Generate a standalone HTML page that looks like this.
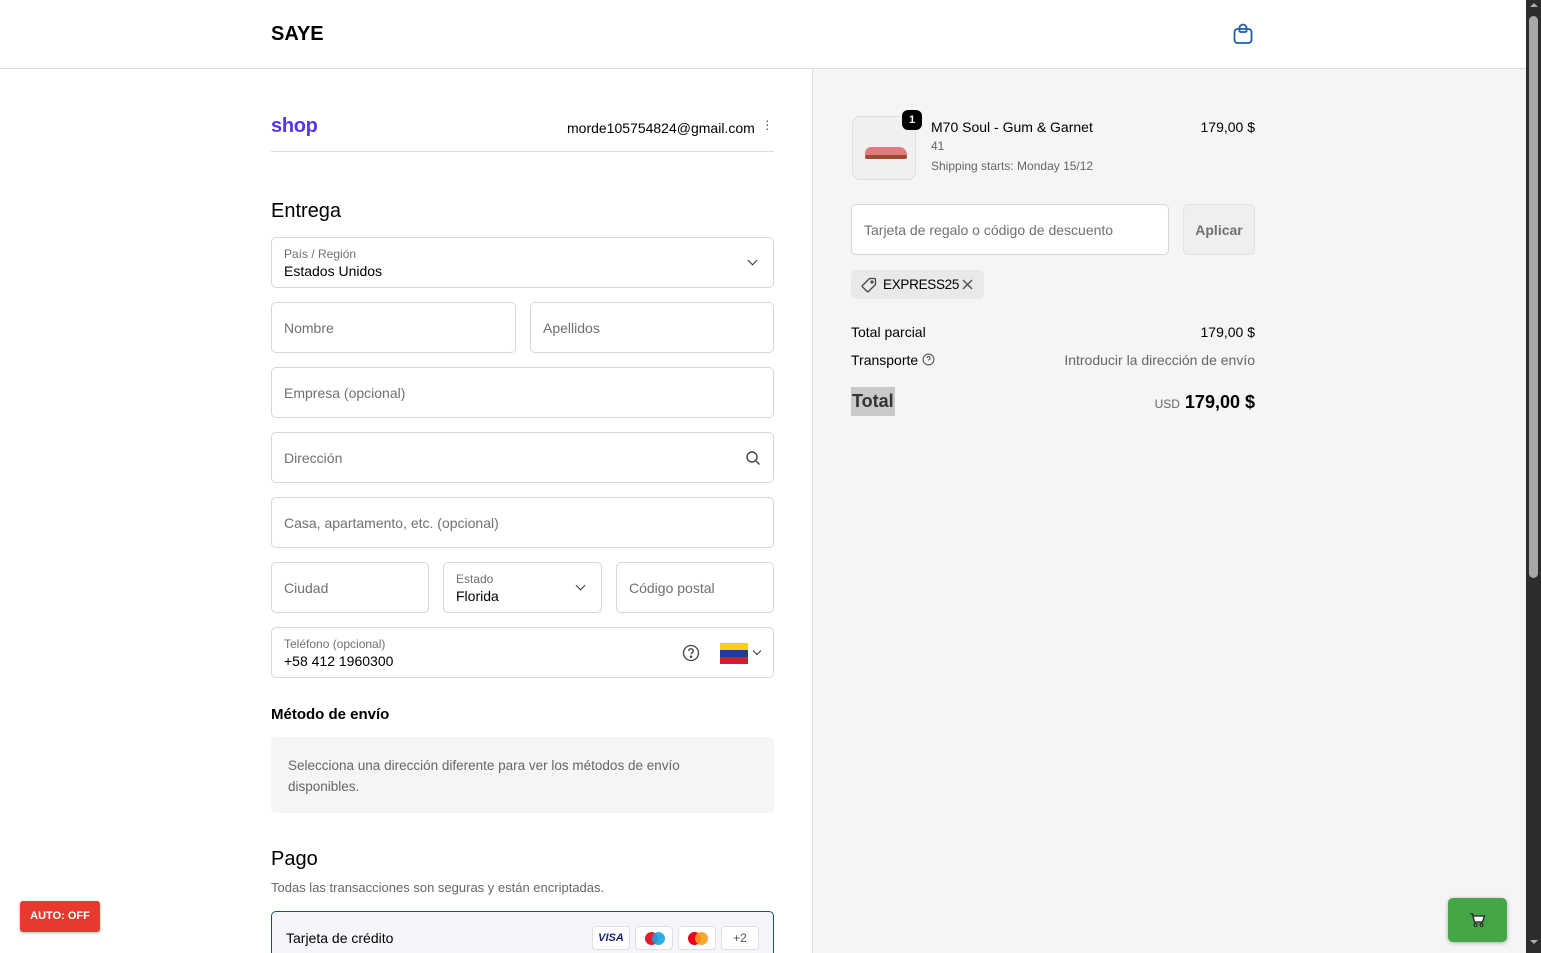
<!DOCTYPE html>
<html><head><meta charset="utf-8"><style>
*{box-sizing:border-box;margin:0;padding:0}
html{width:1541px;height:953px;overflow:hidden}
body{width:1541px;height:953px;overflow:hidden;font-family:"Liberation Sans",sans-serif;color:#000;background:#fff;position:relative;font-size:14px}
.hdr{position:absolute;left:0;top:0;width:1526px;height:69px;border-bottom:1px solid #ddd;background:#fff}
.logo{position:absolute;left:271px;top:23px;font-size:20px;font-weight:bold;letter-spacing:0}
.right{position:absolute;left:812px;top:69px;width:714px;height:884px;background:#f5f5f5;border-left:1px solid #ddd;overflow:hidden}
.sb{position:absolute;left:1526px;top:0;width:15px;height:953px;background:#2c2c2c}
.sb div{position:absolute;left:3px;top:16px;width:9px;height:562px;background:#a8a8a8;border-radius:5px}
.f{position:absolute;border:1px solid #d6d6d6;border-radius:5px;background:#fff;height:51px}
.ph{position:absolute;left:12px;top:17px;color:#707070;font-size:14px}
.lb{position:absolute;left:12px;top:9px;color:#707070;font-size:12px}
.vl{position:absolute;left:12px;top:25px;font-size:14px}
.t{position:absolute;white-space:nowrap}
.chev{position:absolute;width:7px;height:7px;border-right:1.5px solid #333;border-bottom:1.5px solid #333;transform:rotate(45deg)}
.card{position:absolute;width:38px;height:24px;border:1px solid #e0e0e0;border-radius:4px;background:#fff;top:14px}
</style></head><body>
<div class="hdr"><div class="logo">SAYE</div>
<svg style="position:absolute;left:1232px;top:23px" width="22" height="22" viewBox="0 0 22 22" fill="none" stroke="#1d5fa8" stroke-width="1.8"><rect x="2.5" y="6" width="17" height="14" rx="3"/><path d="M7.5 9V5a3.5 3.5 0 0 1 7 0v4"/><path d="M7.5 9h7"/></svg>
</div>
<div class="sb"><div></div>
<span style="position:absolute;left:4px;top:3px;border:4px solid transparent;border-bottom-color:#aaa;border-top:0"></span>
<span style="position:absolute;left:4px;top:940px;border:4px solid transparent;border-top-color:#aaa;border-bottom:0"></span></div>

<div class="t" style="left:271px;top:115px;font-size:20px;font-weight:bold;color:#5a31f4;letter-spacing:-0.3px">shop</div>
<div class="t" style="left:567px;top:120px;font-size:14px">morde105754824@gmail.com</div>
<div class="t" style="left:765px;top:118px;font-size:14px;line-height:4px;color:#555">·<br>·<br>·</div>
<div style="position:absolute;left:271px;top:151px;width:503px;height:1px;background:#ddd"></div>

<div class="t" style="left:271px;top:200px;font-size:20px">Entrega</div>
<div class="f" style="left:271px;top:237px;width:503px"><div class="lb">País / Región</div><div class="vl">Estados Unidos</div><div class="chev" style="left:477px;top:19px"></div></div>
<div class="f" style="left:271px;top:302px;width:245px"><div class="ph">Nombre</div></div>
<div class="f" style="left:530px;top:302px;width:244px"><div class="ph">Apellidos</div></div>
<div class="f" style="left:271px;top:367px;width:503px"><div class="ph">Empresa (opcional)</div></div>
<div class="f" style="left:271px;top:432px;width:503px"><div class="ph">Dirección</div>
<svg style="position:absolute;left:473px;top:17px" width="16" height="16" viewBox="0 0 16 16" fill="none" stroke="#444" stroke-width="1.4"><circle cx="7" cy="7" r="5"/><path d="M11 11l3.5 3.5"/></svg></div>
<div class="f" style="left:271px;top:497px;width:503px"><div class="ph">Casa, apartamento, etc. (opcional)</div></div>
<div class="f" style="left:271px;top:562px;width:158px"><div class="ph">Ciudad</div></div>
<div class="f" style="left:443px;top:562px;width:159px"><div class="lb">Estado</div><div class="vl">Florida</div><div class="chev" style="left:133px;top:19px"></div></div>
<div class="f" style="left:616px;top:562px;width:158px"><div class="ph">Código postal</div></div>
<div class="f" style="left:271px;top:627px;width:503px"><div class="lb">Teléfono (opcional)</div><div class="vl">+58 412 1960300</div>
<svg style="position:absolute;left:410px;top:16px" width="18" height="18" viewBox="0 0 18 18" fill="none" stroke="#444" stroke-width="1.3"><circle cx="9" cy="9" r="7.5"/><path d="M6.8 7a2.2 2.2 0 1 1 3 2c-.6.3-.8.7-.8 1.3"/><circle cx="9" cy="12.8" r=".6" fill="#444"/></svg>
<div style="position:absolute;left:448px;top:15px;width:28px;height:21px"><div style="height:7px;background:#f7d117"></div><div style="height:7px;background:#1d3c9a"></div><div style="height:7px;background:#d0202f"></div></div>
<div class="chev" style="left:482px;top:20px;width:6px;height:6px"></div></div>

<div class="t" style="left:271px;top:706px;font-size:15px;font-weight:bold">Método de envío</div>
<div style="position:absolute;left:271px;top:737px;width:503px;height:76px;background:#f5f5f5;border-radius:5px;padding:18px 70px 18px 17px;color:#666;font-size:13.5px;line-height:21px">Selecciona una dirección diferente para ver los métodos de envío disponibles.</div>

<div class="t" style="left:271px;top:848px;font-size:20px">Pago</div>
<div class="t" style="left:271px;top:880px;font-size:13px;color:#666">Todas las transacciones son seguras y están encriptadas.</div>
<div style="position:absolute;left:271px;top:911px;width:503px;height:60px;border:1px solid #1d4f7a;border-radius:5px;background:#f4f6fb">
<div class="t" style="left:14px;top:18px;font-size:14px">Tarjeta de crédito</div>
<div class="card" style="left:320px;font-size:11px;font-weight:bold;font-style:italic;color:#1a1f71;text-align:center;line-height:22px">VISA</div>
<div class="card" style="left:363px"><span style="position:absolute;left:9px;top:5px;width:13px;height:13px;border-radius:50%;background:#e01e2a"></span><span style="position:absolute;left:16px;top:5px;width:13px;height:13px;border-radius:50%;background:#1aa3e0;opacity:.9"></span></div>
<div class="card" style="left:406px"><span style="position:absolute;left:9px;top:5px;width:13px;height:13px;border-radius:50%;background:#eb001b"></span><span style="position:absolute;left:16px;top:5px;width:13px;height:13px;border-radius:50%;background:#f79e1b;opacity:.9"></span></div>
<div class="card" style="left:449px;font-size:12px;color:#555;text-align:center;line-height:22px">+2</div>
</div>

<div style="position:absolute;left:20px;top:901px;width:80px;height:31px;background:#e8392f;border-radius:3px;color:#fff;font-size:11px;font-weight:bold;text-align:center;line-height:31px;box-shadow:0 1px 3px rgba(0,0,0,.3)">AUTO: OFF</div>

<div class="right">
<div style="position:absolute;left:39px;top:47px;width:64px;height:64px;border:1px solid #ddd;border-radius:8px;background:#f0f0f0;overflow:hidden">
<div style="position:absolute;left:12px;top:30px;width:42px;height:10px;background:#e27a80;border-radius:8px 10px 3px 3px"></div>
<div style="position:absolute;left:12px;top:38px;width:42px;height:4px;background:#9b4c35;border-radius:2px"></div></div>
<div style="position:absolute;left:89px;top:41px;width:20px;height:20px;border-radius:6px;background:#000;color:#fff;font-size:11px;font-weight:bold;text-align:center;line-height:20px">1</div>
<div class="t" style="left:118px;top:50px;font-size:14px">M70 Soul - Gum &amp; Garnet</div>
<div class="t" style="left:118px;top:70px;font-size:12px;color:#666">41</div>
<div class="t" style="left:118px;top:90px;font-size:12px;color:#666">Shipping starts: Monday 15/12</div>
<div class="t" style="right:271px;top:50px;font-size:14px">179,00 $</div>

<div style="position:absolute;left:38px;top:135px;width:318px;height:51px;border:1px solid #d6d6d6;border-radius:5px;background:#fff"><div class="ph">Tarjeta de regalo o código de descuento</div></div>
<div style="position:absolute;left:370px;top:135px;width:72px;height:51px;border:1px solid #e2e2e2;border-radius:5px;background:#efefef;color:#707070;font-weight:bold;font-size:14px;text-align:center;line-height:51px">Aplicar</div>

<div style="position:absolute;left:38px;top:201px;width:133px;height:29px;background:#e9e9e9;border-radius:5px">
<svg style="position:absolute;left:10px;top:7px" width="16" height="16" viewBox="0 0 16 16" fill="none" stroke="#444" stroke-width="1.3"><path d="M8.5 1.5h5a1 1 0 0 1 1 1v5L7.5 14.5a1 1 0 0 1-1.4 0L1.5 9.9a1 1 0 0 1 0-1.4z"/><circle cx="11" cy="5" r="1"/></svg>
<div class="t" style="left:32px;top:7px;font-size:13.5px;letter-spacing:-0.3px">EXPRESS25</div>
<svg style="position:absolute;left:111px;top:9px" width="11" height="11" viewBox="0 0 11 11" stroke="#555" stroke-width="1.5"><path d="M1 1l9 9M10 1l-9 9"/></svg></div>

<div class="t" style="left:38px;top:255px;font-size:14px">Total parcial</div>
<div class="t" style="right:271px;top:255px;font-size:14px">179,00 $</div>
<div class="t" style="left:38px;top:283px;font-size:14px">Transporte</div>
<svg style="position:absolute;left:109px;top:284px" width="13" height="13" viewBox="0 0 18 18" fill="none" stroke="#555" stroke-width="1.5"><circle cx="9" cy="9" r="7.5"/><path d="M6.8 7a2.2 2.2 0 1 1 3 2c-.6.3-.8.7-.8 1.3"/></svg>
<div class="t" style="right:271px;top:283px;font-size:14px;color:#666">Introducir la dirección de envío</div>
<div class="t" style="left:38px;top:318px;height:29px;padding:4px 1px;background:#c9c9c9;font-size:18px;font-weight:bold;color:#333">Total</div>
<div class="t" style="right:271px;top:323px;font-size:18px;font-weight:bold"><span style="font-size:12px;font-weight:normal;color:#666;margin-right:5px">USD</span>179,00 $</div>

<div style="position:absolute;left:635px;top:829px;width:59px;height:44px;background:#44a647;border-radius:5px;box-shadow:0 1px 4px rgba(0,0,0,.3)">
<svg style="position:absolute;left:21px;top:14px" width="17" height="16" viewBox="0 0 17 16" fill="#fff" stroke="#222" stroke-width="1.3"><path d="M1 2h2.5l2 8h8l2-6H4.5"/><circle cx="6.5" cy="13" r="1.3"/><circle cx="12.5" cy="13" r="1.3"/></svg></div>
</div>
</body></html>
